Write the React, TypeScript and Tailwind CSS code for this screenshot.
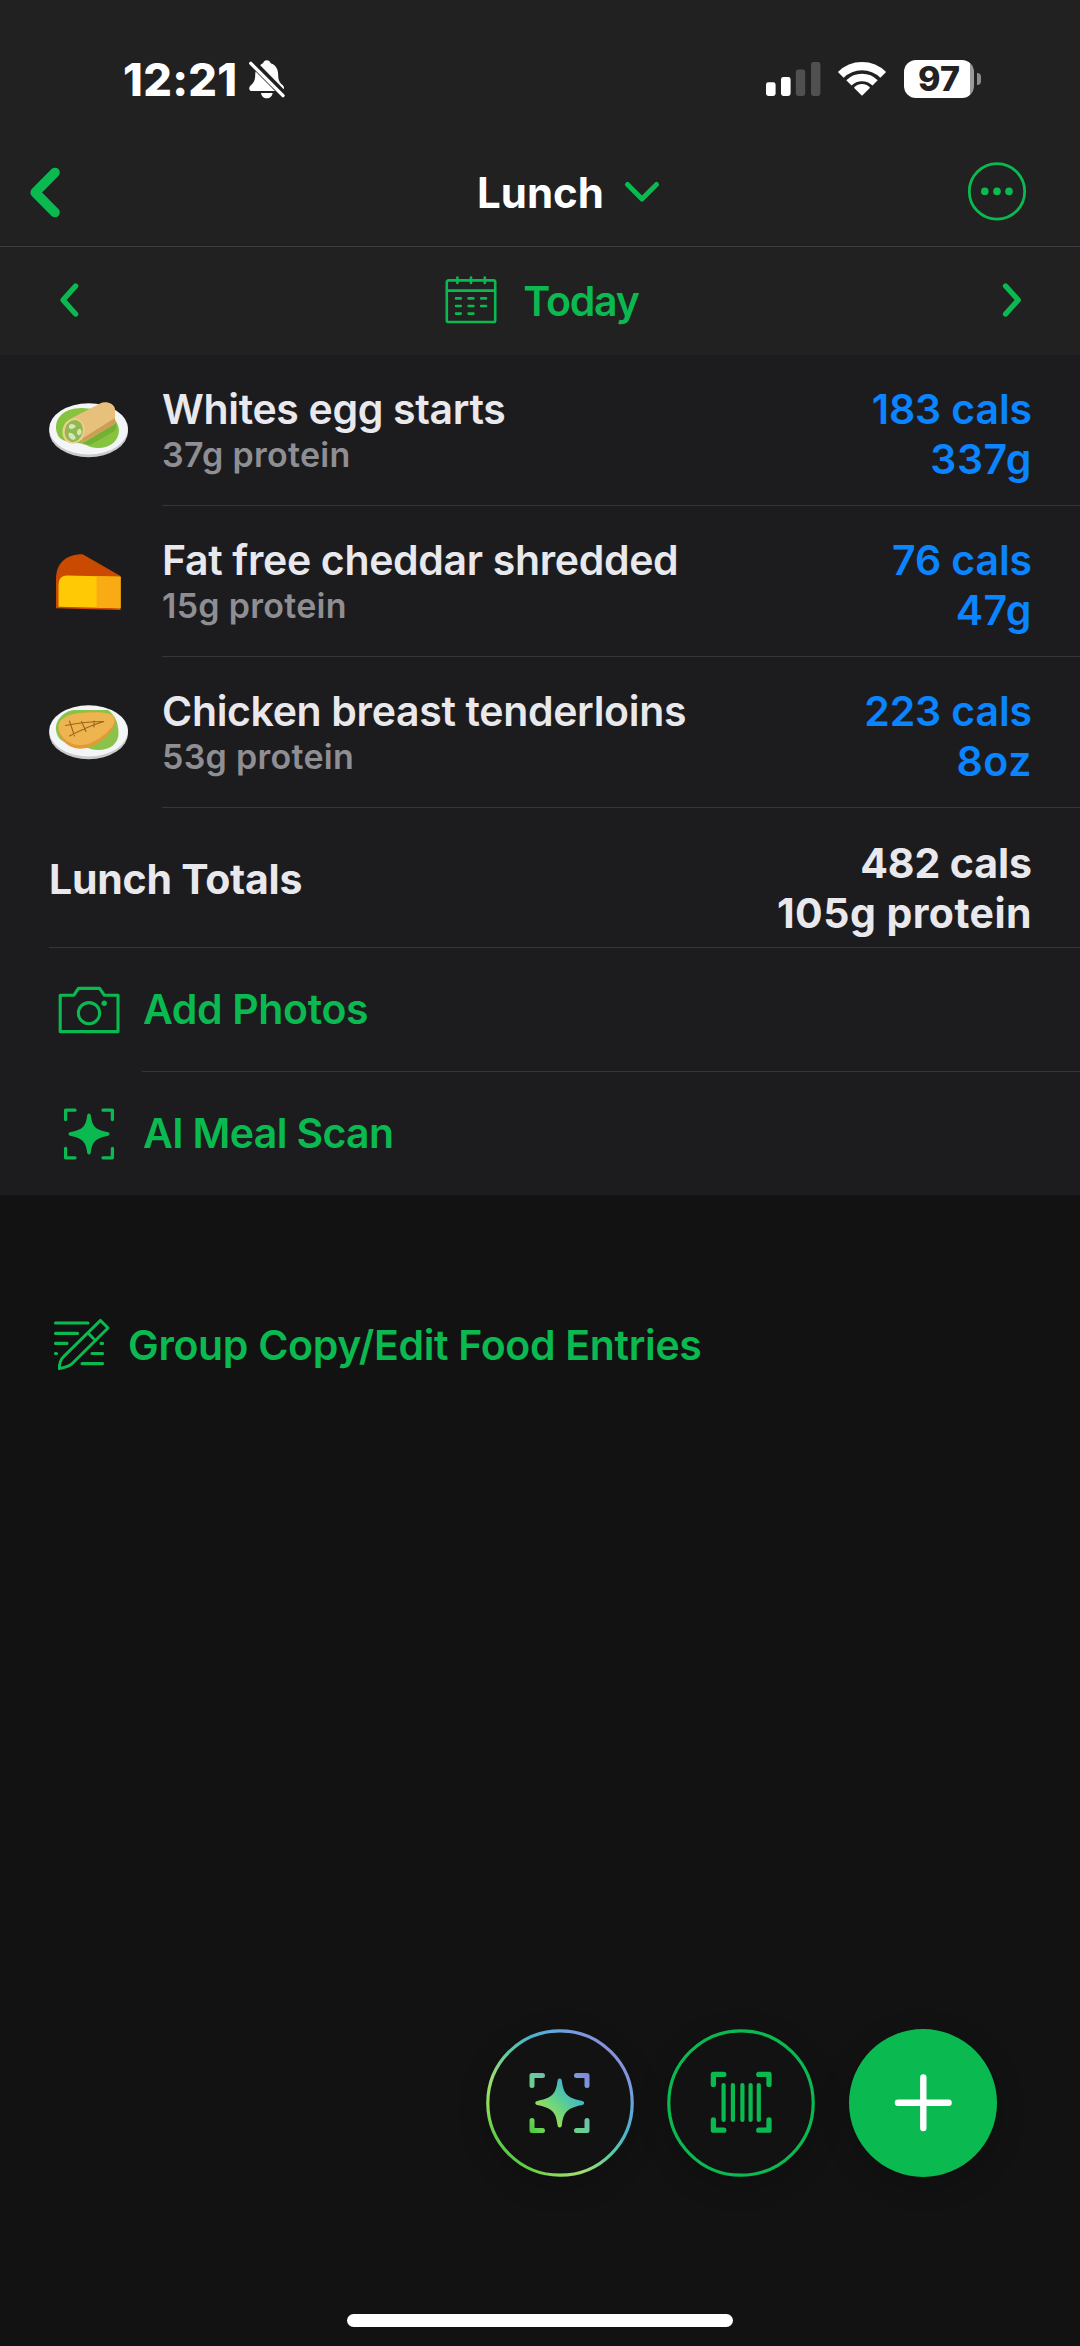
import React from "react";

const GREEN = "#0bb951";

function BellOff() {
  return (
    <svg width="40" height="42" viewBox="0 0 40 42" fill="#fff">
      <path d="M13.2 6.2C14.8 4.9 15.3 4.6 16 4.3C16.6 2.3 18 1.2 19.8 1.2C21.6 1.2 23 2.3 23.7 4.3C29 6 31.2 10.4 31.2 16.4C31.3 21.6 32.9 23.6 35.6 26.1C37.2 27.7 37.3 29.2 36.7 30.2Z" />
      <path d="M8.6 12.6L28 32H4.8C2 32 1.3 28.6 3.6 26.4C6.6 23.8 8 21.6 8.2 16.4C8.2 15 8.3 13.7 8.6 12.6Z" />
      <path d="M14 34H25.6C25.4 37 23 39.3 19.8 39.3C16.6 39.3 14.2 37 14 34Z" />
      <path d="M3.8 4.4L36 36.6" stroke="#fff" strokeWidth="3.4" strokeLinecap="round" />
    </svg>
  );
}

function Signal() {
  return (
    <svg width="56" height="36" viewBox="0 0 56 36">
      <rect x="1" y="21.3" width="9.6" height="13.7" rx="2.4" fill="#fff" />
      <rect x="16" y="16" width="9.6" height="19" rx="2.4" fill="#fff" />
      <rect x="30.8" y="8.5" width="9.4" height="26.5" rx="2.4" fill="#505050" />
      <rect x="46" y="1" width="9.4" height="34" rx="2.4" fill="#505050" />
    </svg>
  );
}

function Wifi() {
  return (
    <svg width="50" height="36" viewBox="0 0 50 36" fill="none" stroke="#fff">
      <path d="M3.8 13.8A30 30 0 0 1 46.2 13.8" strokeWidth="8.2" />
      <path d="M11.9 21.9A18.6 18.6 0 0 1 38.1 21.9" strokeWidth="7.4" />
      <path d="M25 33.6L18 26.6A9.9 9.9 0 0 1 32 26.6Z" fill="#fff" strokeWidth="1.6" strokeLinejoin="round" />
    </svg>
  );
}

function Battery() {
  return (
    <div className="flex items-center gap-[3px]">
      <div className="flex h-[38px] w-[70px] items-center justify-center rounded-[12px] bg-[linear-gradient(90deg,#fff_95%,#9a9a9a_95%)]">
        <span className="text-[34px] leading-[38px] font-extrabold tracking-[0.2px] text-[#222]">97</span>
      </div>
      <div className="h-[12px] w-[4px] rounded-r-full bg-[#8b8b8b]" />
    </div>
  );
}

function Chevron({ w, h, stroke, d }: { w: number; h: number; stroke: number; d: string }) {
  return (
    <svg width={w} height={h} viewBox={`0 0 ${w} ${h}`} fill="none" stroke={GREEN} strokeWidth={stroke} strokeLinecap="round" strokeLinejoin="round">
      <path d={d} />
    </svg>
  );
}

function More() {
  return (
    <svg width="60" height="60" viewBox="0 0 60 60" fill={GREEN}>
      <circle cx="30" cy="29.4" r="27.7" fill="none" stroke={GREEN} strokeWidth="2.8" />
      <circle cx="17.8" cy="29.4" r="3.8" />
      <circle cx="30" cy="29.4" r="3.8" />
      <circle cx="42" cy="29.4" r="3.8" />
    </svg>
  );
}

function Calendar() {
  return (
    <svg width="52" height="48" viewBox="0 0 52 48" fill="none" stroke={GREEN} strokeWidth="2.6" strokeLinecap="round">
      <rect x="1.8" y="4.4" width="48.4" height="41.6" rx="1.6" />
      <path d="M2 14.6H50M12.4 1.6V7M26 1.6V7M39.8 1.6V7" />
      <path d="M11 22.4H15.8M23.6 22.4H28.4M36.2 22.4H41M11 30H15.8M23.6 30H28.4M36.2 30H41M11 37.6H15.8M23.6 37.6H28.4" />
    </svg>
  );
}

function Plate({ children }: { children: React.ReactNode }) {
  return (
    <svg width="100" height="100" viewBox="0 0 100 100">
      <ellipse cx="48.6" cy="51.2" rx="39.4" ry="26" fill="#c9cacc" />
      <ellipse cx="48.6" cy="48.8" rx="39.4" ry="25.6" fill="#f4f5f6" />
      {children}
    </svg>
  );
}

function WrapIcon() {
  return (
    <Plate>
      <path d="M17 53C13 40 22 28 42 28L66 30C73 36 78 42 79 50C79 61 70 68 58 68C48 68 47 63 36 63C26 62 19 60 17 53Z" fill="#86c440" />
      <path d="M42 64L76 43C77 48 76 50 73 52L50 65Z" fill="#6ba832" opacity="0.7" />
      <path d="M31 38.5L60 23.5C66 20.6 74 23.5 75 29V41C75 43 74.5 44 73 45L42 62.5Z" fill="#e7c07c" />
      <path d="M43 58L75 38V41C75 43 74.5 44 73 45L40 63.5Z" fill="#cf9c58" />
      <ellipse cx="33.6" cy="51" rx="11" ry="12.8" transform="rotate(15 33.6 51)" fill="#efcf90" />
      <ellipse cx="33.8" cy="51" rx="9" ry="11" transform="rotate(15 33.8 51)" fill="#90b94e" />
      <path d="M29 48C28 43 33 43 36 46C34 49 31 50 29 48Z" fill="#d3e6c0" />
      <path d="M37 52C38 47 42 48 41.5 53C40 56 37 56 37 52Z" fill="#d3e6c0" />
      <path d="M28.5 53C32 52 36 56 35.5 59C32 61 28 58 28.5 53Z" fill="#d3e6c0" />
    </Plate>
  );
}

function CheeseIcon() {
  return (
    <svg width="100" height="100" viewBox="0 0 100 100">
      <path d="M16 77.3V48C16 33 25 23.3 42.6 23.3L80.5 45V79Z" fill="#c94a00" />
      <path d="M18.5 75.7V55C18.5 48 21 44.5 27 44.5L80.5 45.8V77.3Z" fill="#ffc905" />
      <path d="M56.6 45.2L80.5 45.8V77.3L56.6 76.6Z" fill="#f9ab14" />
    </svg>
  );
}

function ChickenIcon() {
  return (
    <Plate>
      <path d="M16 48C15 38 24 29 34 28H68C76 34 78 41 78.5 50C79 61 71 68 58 68C47 68 46 63 36 62C22 62 17 56 16 48Z" fill="#8bc34a" />
      <path d="M18.5 47C18 38 28 32.5 40 31C52 29.5 66 30 72 33C76 36 76 43 72 48C66 57 54 65 43 66.5C30 68 19 58 18.5 47Z" fill="#e39a35" />
      <path d="M18.5 45C18 37 28 32 40 31C52 29.5 66 30 71.5 32.5C75.5 35 75.5 41 71.5 45.5C65 53 54 61.5 43 63C30 64.5 19 55 18.5 45Z" fill="#edb44f" />
      <path d="M25.5 43.5C38 41 51 39.5 64 39.5C52 43 40 48.5 29.5 54M29.5 39L34.5 54M41.5 39.5L46 49.5M54 39V45" fill="none" stroke="#9c6420" strokeWidth="1.1" strokeLinecap="round" />
    </Plate>
  );
}

function Camera() {
  return (
    <svg width="64" height="50" viewBox="0 0 64 50" fill="none" stroke={GREEN} strokeWidth="3.1" strokeLinejoin="round">
      <path d="M3.2 10.2H17L21.4 3.4H42.6L47.2 10.2H61V46.6H3.2Z" />
      <circle cx="32" cy="28.2" r="10.6" />
      <circle cx="47.2" cy="18.2" r="2.7" fill={GREEN} stroke="none" />
    </svg>
  );
}

const STAR =
  "M0 -20.5C1.3 -20.5 1.7 -19.5 1.9 -18C3.2 -8.5 5.5 -4.4 18 -1.9C19.5 -1.7 20.5 -1.3 20.5 0C20.5 1.3 19.5 1.7 18 1.9C5.5 4.4 3.2 8.5 1.9 18C1.7 19.5 1.3 20.5 0 20.5C-1.3 20.5 -1.7 19.5 -1.9 18C-3.2 8.5 -5.5 4.4 -18 1.9C-19.5 1.7 -20.5 1.3 -20.5 0C-20.5 -1.3 -19.5 -1.7 -18 -1.9C-5.5 -4.4 -3.2 -8.5 -1.9 -18C-1.7 -19.5 -1.3 -20.5 0 -20.5Z";

function Scan() {
  return (
    <svg width="52" height="52" viewBox="0 0 52 52" fill="none" stroke={GREEN} strokeWidth="3.3" strokeLinecap="round" strokeLinejoin="round">
      <path d="M2.6 11.6V2.2H12M40 2.2H49.4V11.6M49.4 40.4V49.8H40M12 49.8H2.6V40.4" />
      <path d={STAR} transform="translate(26 26)" fill={GREEN} stroke="none" />
    </svg>
  );
}

function EditList() {
  return (
    <svg width="66" height="66" viewBox="0 0 66 66" fill="none" stroke={GREEN} strokeWidth="3.1" strokeLinecap="round" strokeLinejoin="round">
      <path d="M5.5 12H38M5.5 22.4H27.5M5.5 32.4H17M5.5 42.5H6.5M51 32.4H52.6M42 42.5H52.6M32 52.6H52.6" />
      <path d="M50.5 9.4L58 17L21.5 53.2C18 56 14 56.8 9.4 57.7C9.3 53 10.5 48.5 13.6 45.6ZM38 22L45.4 29.6" strokeWidth="2.9" />
    </svg>
  );
}

function AiFab() {
  return (
    <svg width="148" height="148" viewBox="0 0 148 148" fill="none" strokeLinecap="round" strokeLinejoin="round">
      <defs>
        <linearGradient id="ring" gradientUnits="userSpaceOnUse" x1="22" y1="126" x2="126" y2="22">
          <stop offset="0" stopColor="#55c945" />
          <stop offset="0.14" stopColor="#8fdc58" />
          <stop offset="0.28" stopColor="#a0dd72" />
          <stop offset="0.5" stopColor="#5cc9a2" />
          <stop offset="0.68" stopColor="#4bb4cc" />
          <stop offset="0.85" stopColor="#68a4dc" />
          <stop offset="1" stopColor="#8a90dc" />
        </linearGradient>
        <linearGradient id="corners" gradientUnits="userSpaceOnUse" x1="44" y1="104" x2="104" y2="44">
          <stop offset="0" stopColor="#45c93b" />
          <stop offset="0.15" stopColor="#6fd65a" />
          <stop offset="0.5" stopColor="#68cd9a" />
          <stop offset="0.85" stopColor="#7a9bdc" />
          <stop offset="1" stopColor="#8580dc" />
        </linearGradient>
        <linearGradient id="star" gradientUnits="userSpaceOnUse" x1="-12" y1="12" x2="12" y2="-12">
          <stop offset="0" stopColor="#a2e052" />
          <stop offset="0.5" stopColor="#5fd08c" />
          <stop offset="1" stopColor="#3fb3d4" />
        </linearGradient>
      </defs>
      <circle cx="74" cy="74" r="72.2" stroke="url(#ring)" strokeWidth="3.2" />
      <path d="M46 56.5V46.5H56.5M90.5 46.5H101V56.5M101 91.5V101.5H90.5M56.5 101.5H46V91.5" stroke="url(#corners)" strokeWidth="5" />
      <path d={STAR} transform="translate(73.7 74) scale(1.19)" fill="url(#star)" />
    </svg>
  );
}

function BarcodeFab() {
  return (
    <svg width="148" height="148" viewBox="0 0 148 148" fill="none" stroke={GREEN} strokeLinecap="round" strokeLinejoin="round">
      <circle cx="74" cy="74" r="72.2" strokeWidth="3.2" />
      <path d="M46.4 55.4V45.4H56.8M91.8 45.4H102V55.4M102 91V101.2H91.8M56.8 101.2H46.4V91" strokeWidth="5.3" />
      <path d="M56.6 56V91M65.9 56V91M75.4 56V91M83.6 56V91M91.8 56V91" strokeWidth="4.2" />
    </svg>
  );
}

function AddFab() {
  return (
    <svg width="148" height="148" viewBox="0 0 148 148">
      <circle cx="74" cy="74" r="74" fill={GREEN} />
      <path d="M74.3 48.5V99M49 73.7H99.6" stroke="#fff" strokeWidth="6.4" strokeLinecap="round" />
    </svg>
  );
}

type Food = {
  icon: React.ReactNode;
  name: string;
  protein: string;
  cals: string;
  amount: string;
};

const foods: Food[] = [
  { icon: <WrapIcon />, name: "Whites egg starts", protein: "37g protein", cals: "183 cals", amount: "337g" },
  { icon: <CheeseIcon />, name: "Fat free cheddar shredded", protein: "15g protein", cals: "76 cals", amount: "47g" },
  { icon: <ChickenIcon />, name: "Chicken breast tenderloins", protein: "53g protein", cals: "223 cals", amount: "8oz" },
];

function FoodRow({ icon, name, protein, cals, amount }: Food) {
  return (
    <div className="flex h-[151px]">
      <div className="flex w-[162px] shrink-0 items-center pb-px pl-[40px]">{icon}</div>
      <div className="flex flex-1 justify-between border-b border-[#363638] pr-[48px]">
        <div className="pt-[32px]">
          <div className="text-[41px] leading-[45px] font-semibold tracking-[-0.33px] text-[#e8e8ed]">{name}</div>
          <div className="mt-[2px] text-[34px] leading-[41px] font-semibold tracking-[0.28px] text-[#8e8e93]">{protein}</div>
        </div>
        <div className="pt-[29px] text-right text-[41px] leading-[50px] font-semibold text-[#0a84ff]">
          <div className="tracking-[-0.1px]">{cals}</div>
          <div className="tracking-[0.6px]">{amount}</div>
        </div>
      </div>
    </div>
  );
}

export default function App() {
  return (
    <div className="flex h-[2346px] w-[1080px] flex-col overflow-hidden bg-[#121212] font-[Inter,sans-serif]">
      <header className="bg-[#212121]">
        <div className="flex h-[138px] items-start justify-between pt-[59px] pr-[99px] pl-[123px]">
          <div className="flex h-[42px] items-center gap-[6px]">
            <span className="w-[118px] text-[45px] leading-[42px] font-extrabold tracking-[0.3px] text-white">12:21</span>
            <BellOff />
          </div>
          <div className="flex h-[40px] items-center">
            <Signal />
            <div className="mr-[17px] ml-[16px]">
              <Wifi />
            </div>
            <Battery />
          </div>
        </div>
        <div className="grid h-[109px] grid-cols-[1fr_auto_1fr] items-center border-b border-[#3d3d3f] pr-[53px] pl-[28px]">
          <Chevron w={34} h={52} stroke={9.6} d="M27 6.5L7.2 26.5L27 46.5" />
          <div className="flex items-center gap-[19px] pl-[83px]">
            <span className="pt-[2px] text-[42px] leading-[50px] font-bold text-white">Lunch</span>
            <Chevron w={38} h={26} stroke={5} d="M4.5 5.5L19 20L33.5 5.5" />
          </div>
          <div className="flex justify-end">
            <More />
          </div>
        </div>
        <div className="flex h-[108px] items-center justify-between pr-[55px] pb-[3px] pl-[56px]">
          <Chevron w={26} h={40} stroke={5.4} d="M19.6 6L7 20L19.6 34" />
          <div className="flex items-center gap-[26px] pl-[3px]">
            <Calendar />
            <span className="pt-[2px] text-[41px] leading-[50px] font-semibold tracking-[-1.2px]" style={{ color: GREEN }}>
              Today
            </span>
          </div>
          <Chevron w={26} h={40} stroke={5.4} d="M6.6 6L19.2 20L6.6 34" />
        </div>
      </header>

      <main className="bg-[#1c1c1e]">
        {foods.map((food) => (
          <FoodRow key={food.name} {...food} />
        ))}
        <div className="ml-[49px] flex h-[140px] justify-between border-b border-[#363638] pr-[48px] font-bold text-[#e8e8ed]">
          <span className="self-center pt-[2px] text-[41px] leading-[50px] tracking-[-0.23px]">Lunch Totals</span>
          <div className="pt-[30px] text-right text-[41px] leading-[50px]">
            <div className="tracking-[-0.06px]">482 cals</div>
            <div className="tracking-[0.46px]">105g protein</div>
          </div>
        </div>
        <div className="flex h-[124px]">
          <div className="flex w-[142px] items-center pl-[57px]">
            <Camera />
          </div>
          <div className="flex flex-1 items-center border-b border-[#363638] pt-px pl-px text-[41px] font-semibold tracking-[-0.36px]" style={{ color: GREEN }}>
            Add Photos
          </div>
        </div>
        <div className="flex h-[123px] items-center">
          <div className="flex w-[142px] pl-[63px]">
            <Scan />
          </div>
          <div className="pt-px pl-px text-[41px] font-semibold tracking-[-0.64px]" style={{ color: GREEN }}>
            AI Meal Scan
          </div>
        </div>
      </main>

      <div className="mt-[111px] flex h-[76px] items-center gap-[12px] pl-[50px]">
        <EditList />
        <span className="pt-[2px] text-[41px] leading-[50px] font-semibold tracking-[-0.32px]" style={{ color: GREEN }}>
          Group Copy/Edit Food Entries
        </span>
      </div>

      <footer className="mt-auto pb-[19px]">
        <div className="flex justify-end gap-[33px] pr-[83px]">
          <button className="size-[148px] rounded-full shadow-[0_8px_30px_rgba(0,0,0,0.2)]">
            <AiFab />
          </button>
          <button className="mr-px size-[148px] rounded-full shadow-[0_8px_30px_rgba(0,0,0,0.2)]">
            <BarcodeFab />
          </button>
          <button className="size-[148px] rounded-full shadow-[0_8px_30px_rgba(0,0,0,0.2)]">
            <AddFab />
          </button>
        </div>
        <div className="mx-auto mt-[137px] h-[13px] w-[386px] rounded-full bg-white" />
      </footer>
    </div>
  );
}
